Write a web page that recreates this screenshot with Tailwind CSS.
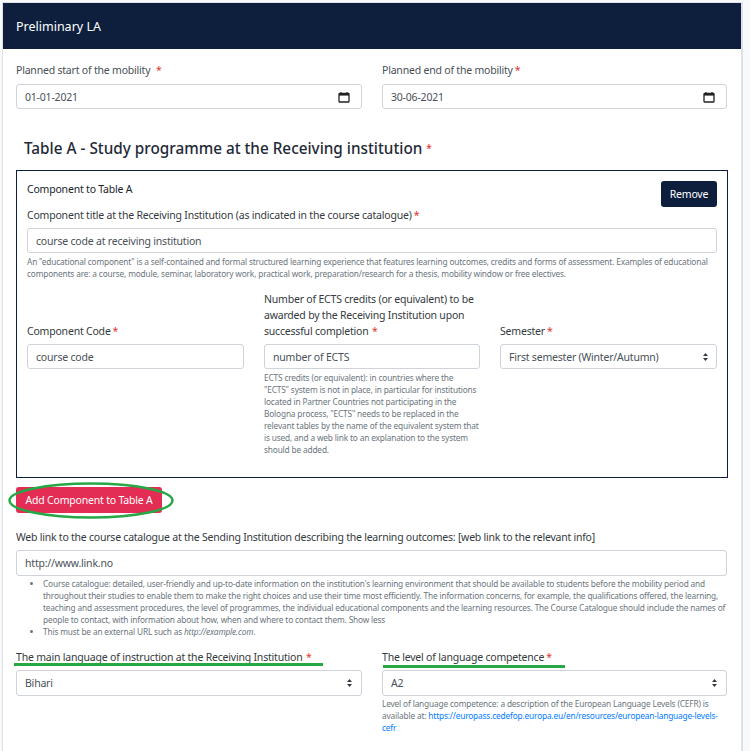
<!DOCTYPE html>
<html lang="en">
<head>
  <meta charset="UTF-8">
  <title>Preliminary LA</title>
  <script src="https://cdn.jsdelivr.net/npm/@tailwindcss/browser@4"></script>
</head>
<body class="bg-[#f8f9fa] h-[751px] overflow-hidden font-['Noto_Sans','Open_Sans',sans-serif] text-[#212529]">
  <div class="relative ml-[3px] mt-[3px] w-[739px] h-[748px] bg-white border-r border-[#dee2e6] outline outline-[#dee2e6]">
    <!-- header -->
    <div class="h-[46px] bg-[#0d1f3d] flex items-center pt-[2px] px-[13px] text-white text-[12.5px]">Preliminary LA</div>

    <div class="px-[13px] tracking-[-0.2px]">
      <!-- dates -->
      <div class="grid grid-cols-[346px_345px] gap-x-[20px] pt-[13px]">
        <div>
          <label class="block h-[22px] leading-[16px] text-[10.5px] text-[#495057]">Planned start of the mobility <span class="text-[#e3342f] ml-[3px]">*</span></label>
          <div class="h-[25px] border border-[#ced4da] rounded-[3px] flex items-center justify-between pl-[8px] pr-[11px] text-[10.5px] text-[#495057]">
            <span class="pt-[2px]">01-01-2021</span>
            <svg class="w-[12px] h-[12px]" viewBox="0 0 12 12" fill="none"><path d="M1.5 2.5h9a.5.5 0 0 1 .5.5v7.5a.5.5 0 0 1-.5.5h-9a.5.5 0 0 1-.5-.5V3a.5.5 0 0 1 .5-.5z" stroke="#222" stroke-width="1.3"/><path d="M1 2.5h10V4.6H1z" fill="#222"/><path d="M3 1v2M9 1v2" stroke="#222" stroke-width="1.2"/></svg>
          </div>
        </div>
        <div>
          <label class="block h-[22px] leading-[16px] text-[10.5px] text-[#495057]">Planned end of the mobility<span class="text-[#e3342f] ml-[2px]">*</span></label>
          <div class="h-[25px] border border-[#ced4da] rounded-[3px] flex items-center justify-between pl-[8px] pr-[11px] text-[10.5px] text-[#495057]">
            <span class="pt-[2px]">30-06-2021</span>
            <svg class="w-[12px] h-[12px]" viewBox="0 0 12 12" fill="none"><path d="M1.5 2.5h9a.5.5 0 0 1 .5.5v7.5a.5.5 0 0 1-.5.5h-9a.5.5 0 0 1-.5-.5V3a.5.5 0 0 1 .5-.5z" stroke="#222" stroke-width="1.3"/><path d="M1 2.5h10V4.6H1z" fill="#222"/><path d="M3 1v2M9 1v2" stroke="#222" stroke-width="1.2"/></svg>
          </div>
        </div>
      </div>

      <!-- table A -->
      <h2 class="mt-[27px] ml-[8px] h-[34px] leading-[24px] tracking-normal text-[15.3px] font-medium text-[#1f2a37]">Table A - Study programme at the Receiving institution <span class="text-[#e3342f] text-[10px] align-top">*</span></h2>

      <div class="w-[712px] h-[308px] border border-[#0d1f3d] px-[10px] pt-[10px]">
        <div class="flex justify-between items-start h-[26px]">
          <span class="text-[10.5px] leading-[16px]">Component to Table A</span>
          <button class="w-[56px] h-[26px] pt-[1px] bg-[#0d1f3d] rounded-[3px] text-white text-[10.5px]">Remove</button>
        </div>
        <label class="block h-[21px] leading-[16px] text-[10.5px] text-[#343a40]">Component title at the Receiving Institution (as indicated in the course catalogue)<span class="text-[#e3342f] ml-[2px]">*</span></label>
        <div class="h-[25px] pt-[2px] border border-[#ced4da] rounded-[3px] flex items-center pl-[8px] text-[10.5px] text-[#495057]">course code at receiving institution</div>
        <p class="mt-[3px] text-[8.3px] tracking-[-0.16px] leading-[12px] text-[#6c757d]">An "educational component" is a self-contained and formal structured learning experience that features learning outcomes, credits and forms of assessment. Examples of educational components are: a course, module, seminar, laboratory work, practical work, preparation/research for a thesis, mobility window or free electives.</p>

        <div class="grid grid-cols-[217px_216px_217px] gap-x-[20px] mt-[11px]">
          <div class="flex flex-col justify-end">
            <label class="block leading-[16px] text-[10.5px] text-[#343a40] mb-[5px]">Component Code<span class="text-[#e3342f] ml-[2px]">*</span></label>
            <div class="h-[25px] pt-[2px] border border-[#ced4da] rounded-[3px] flex items-center pl-[8px] text-[10.5px] text-[#495057]">course code</div>
          </div>
          <div>
            <label class="block leading-[16px] text-[10.5px] text-[#343a40] mb-[5px]">Number of ECTS credits (or equivalent) to be awarded by the Receiving Institution upon successful completion <span class="text-[#e3342f] ml-[1px]">*</span></label>
            <div class="h-[25px] pt-[2px] border border-[#ced4da] rounded-[3px] flex items-center pl-[8px] text-[10.5px] text-[#495057]">number of ECTS</div>
          </div>
          <div class="flex flex-col justify-end">
            <label class="block leading-[16px] text-[10.5px] text-[#343a40] mb-[5px]">Semester<span class="text-[#e3342f] ml-[2px]">*</span></label>
            <div class="h-[25px] border border-[#ced4da] rounded-[3px] flex items-center justify-between pl-[8px] pr-[8px] text-[10.5px] text-[#495057]">
              <span class="pt-[2px]">First semester (Winter/Autumn)</span>
              <svg class="w-[5px] h-[8px]" viewBox="0 0 6 9" preserveAspectRatio="none"><path d="M3 0l3 3.4H0zM3 9L0 5.6h6z" fill="#343a40"/></svg>
            </div>
          </div>
          <div></div>
          <p class="mt-[3px] text-[8.3px] tracking-[-0.16px] leading-[12px] text-[#6c757d]">ECTS credits (or equivalent): in countries where the "ECTS" system is not in place, in particular for institutions located in Partner Countries not participating in the Bologna process, "ECTS" needs to be replaced in the relevant tables by the name of the equivalent system that is used, and a web link to an explanation to the system should be added.</p>
          <div></div>
        </div>
      </div>

      <button class="block mt-[9px] w-[146px] h-[26px] pt-[1px] bg-[#e32d55] rounded-[3px] text-white text-[10.5px]">Add Component to Table A</button>

      <label class="block mt-[15px] h-[22px] leading-[18px] tracking-[-0.23px] text-[10.5px] text-[#343a40]">Web link to the course catalogue at the Sending Institution describing the learning outcomes: [web link to the relevant info]</label>
      <div class="w-[711px] h-[26px] pt-[2px] border border-[#ced4da] rounded-[3px] flex items-center pl-[8px] text-[10.5px] text-[#495057]">http://www.link.no</div>
      <ul class="list-disc pl-[27px] mt-[2px] text-[8.3px] tracking-[-0.16px] leading-[12px] text-[#6c757d] w-[711px]">
        <li>Course catalogue: detailed, user-friendly and up-to-date information on the institution's learning environment that should be available to students before the mobility period and throughout their studies to enable them to make the right choices and use their time most efficiently. The information concerns, for example, the qualifications offered, the learning, teaching and assessment procedures, the level of programmes, the individual educational components and the learning resources. The Course Catalogue should include the names of people to contact, with information about how, when and where to contact them. Show less</li>
        <li>This must be an external URL such as <em>http://example.com</em>.</li>
      </ul>

      <!-- language -->
      <div class="grid grid-cols-[346px_345px] gap-x-[20px] mt-[11px]">
        <div>
          <label class="block h-[21px] leading-[17px] text-[10.5px] text-[#343a40]">The main language of instruction at the Receiving Institution <span class="text-[#e3342f] ml-[1px]">*</span></label>
          <div class="h-[26px] border border-[#ced4da] rounded-[3px] flex items-center justify-between pl-[8px] pr-[9px] text-[10.5px] text-[#495057]">
            <span class="pt-[2px]">Bihari</span>
            <svg class="w-[5px] h-[8px]" viewBox="0 0 6 9" preserveAspectRatio="none"><path d="M3 0l3 3.4H0zM3 9L0 5.6h6z" fill="#343a40"/></svg>
          </div>
        </div>
        <div>
          <label class="block h-[21px] leading-[17px] text-[10.5px] text-[#343a40]">The level of language competence<span class="text-[#e3342f] ml-[2px]">*</span></label>
          <div class="h-[26px] border border-[#ced4da] rounded-[3px] flex items-center justify-between pl-[8px] pr-[9px] text-[10.5px] text-[#495057]">
            <span class="pt-[2px]">A2</span>
            <svg class="w-[5px] h-[8px]" viewBox="0 0 6 9" preserveAspectRatio="none"><path d="M3 0l3 3.4H0zM3 9L0 5.6h6z" fill="#343a40"/></svg>
          </div>
          <p class="mt-[2px] text-[8.3px] tracking-[-0.16px] leading-[12px] text-[#6c757d]">Level of language competence: a description of the European Language Levels (CEFR) is available at: <a class="text-[#007bff]" href="#">https://europass.cedefop.europa.eu/en/resources/european-language-levels-cefr</a></p>
        </div>
      </div>
    </div>

    <!-- green annotations drawn over the form -->
    <svg class="absolute left-[5px] top-[479px] w-[166px] h-[37px]" viewBox="0 0 166 37" fill="none"><ellipse cx="83" cy="18.5" rx="81.5" ry="17" stroke="#28a745" stroke-width="2.5"/></svg>
    <div class="absolute left-[11px] top-[660px] w-[309px] h-[3px] bg-[#28a745]"></div>
    <div class="absolute left-[380px] top-[662px] w-[182px] h-[3px] bg-[#28a745]"></div>
  </div>
</body>
</html>
